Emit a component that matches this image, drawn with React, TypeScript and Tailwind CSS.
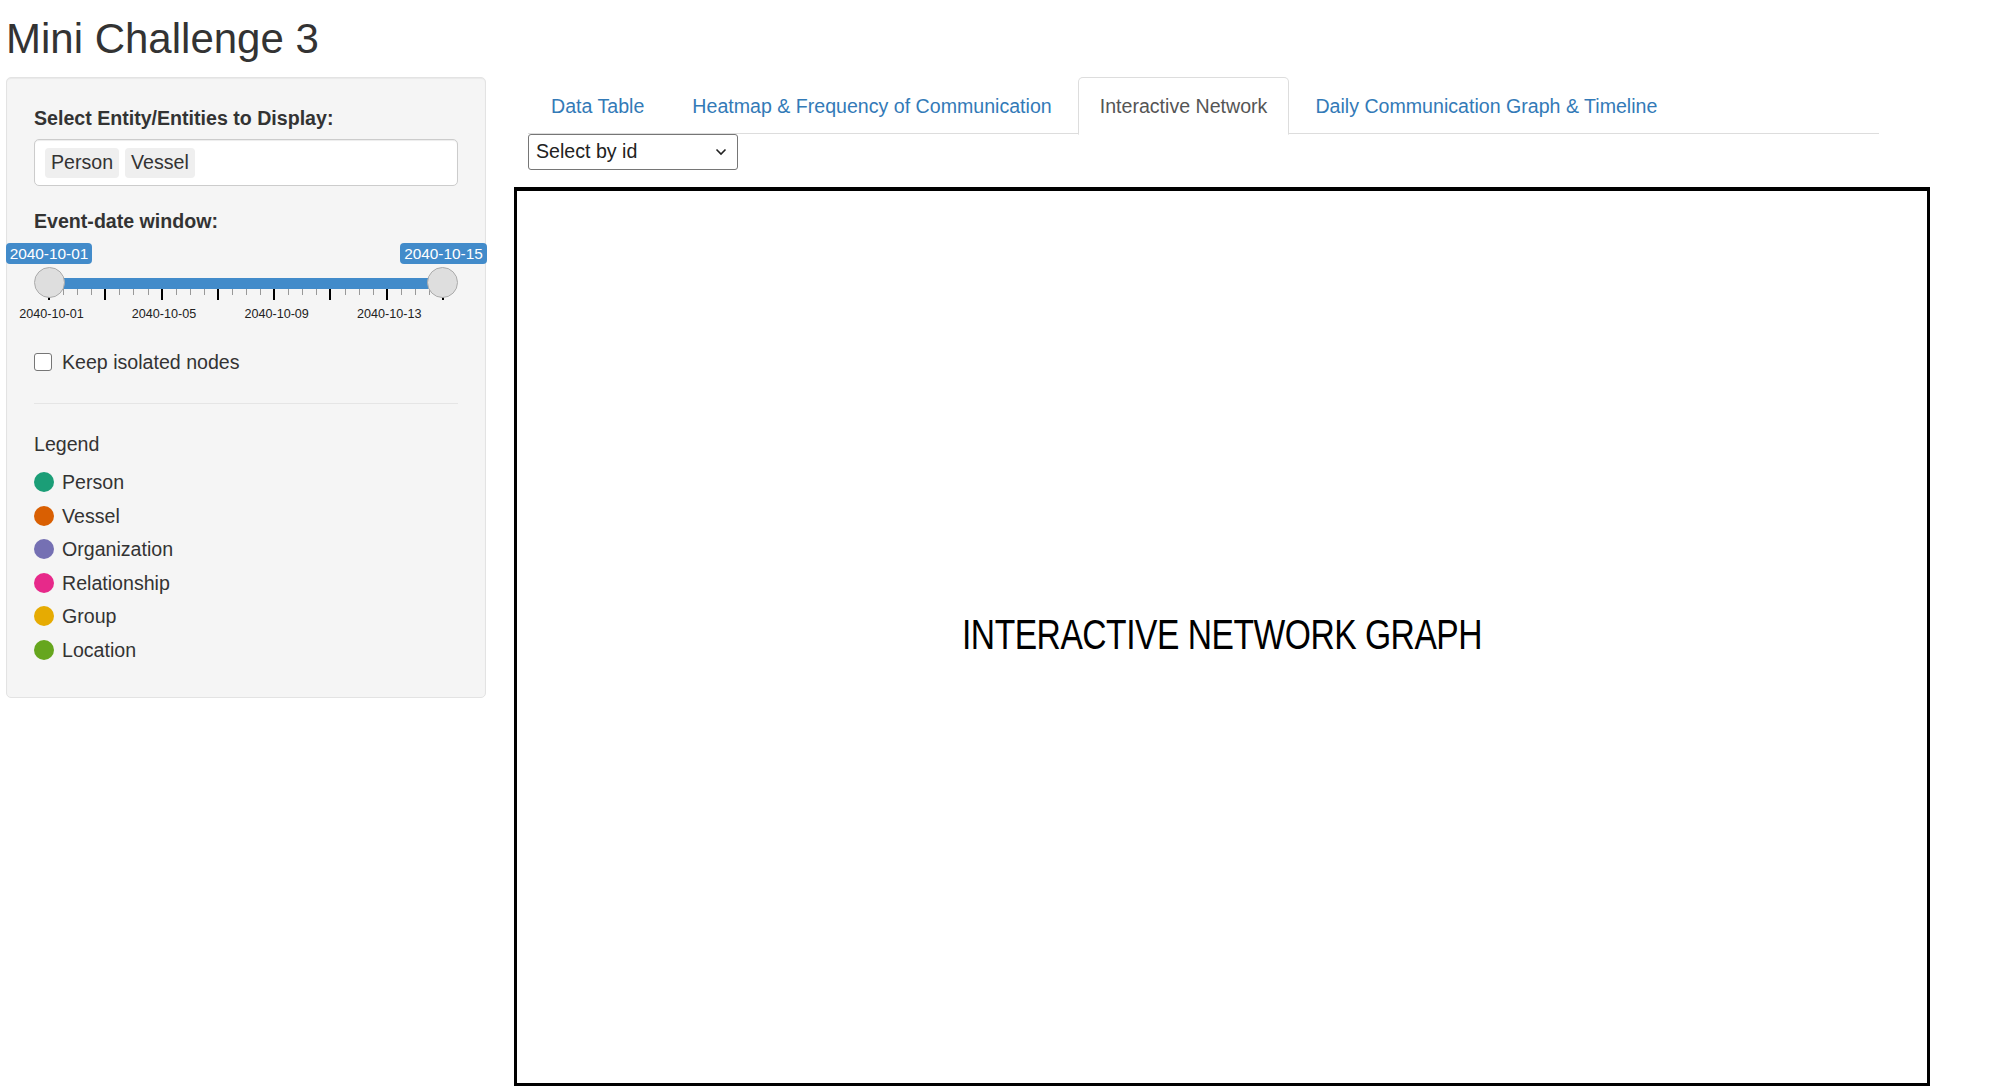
import React from "react";

const legend = [
  { label: "Person", color: "bg-[#1b9e77]" },
  { label: "Vessel", color: "bg-[#d95f02]" },
  { label: "Organization", color: "bg-[#7570b3]" },
  { label: "Relationship", color: "bg-[#e7298a]" },
  { label: "Group", color: "bg-[#e6ab02]" },
  { label: "Location", color: "bg-[#66a61e]" },
];

const tabs = [
  { label: "Data Table", active: false },
  { label: "Heatmap & Frequency of Communication", active: false },
  { label: "Interactive Network", active: true },
  { label: "Daily Communication Graph & Timeline", active: false },
];

const tickCount = 29;
const trackLeft = 15;
const trackWidth = 394;
const gridLabels = [
  { i: 0, text: "2040-10-01" },
  { i: 8, text: "2040-10-05" },
  { i: 16, text: "2040-10-09" },
  { i: 24, text: "2040-10-13" },
];

function DateSlider() {
  const step = trackWidth / (tickCount - 1);
  return (
    <div className="relative h-[90px] w-full">
      {Array.from({ length: tickCount }, (_, i) => {
        const major = i % 4 === 0;
        const x = trackLeft + i * step;
        return major ? (
          <div
            key={i}
            className="absolute top-[54px] h-[11px] w-[2px] bg-black"
            style={{ left: x - 1 }}
          />
        ) : (
          <div
            key={i}
            className="absolute top-[54px] h-[6px] w-[1px] bg-[#999]"
            style={{ left: x }}
          />
        );
      })}
      {gridLabels.map((g) => (
        <div
          key={g.i}
          className="absolute top-[72px] -translate-x-1/2 whitespace-nowrap text-[12.6px] leading-[14px] text-[#222]"
          style={{ left: trackLeft + g.i * step + 2.5 }}
        >
          {g.text}
        </div>
      ))}
      <div className="absolute left-[15px] top-[43px] h-[11px] w-[394px] bg-[#428bca]" />
      <div className="absolute left-[0px] top-[32px] h-[31px] w-[31px] rounded-full border border-[#ababab] bg-[#dedede]" />
      <div className="absolute left-[393px] top-[32px] h-[31px] w-[31px] rounded-full border border-[#ababab] bg-[#dedede]" />
      <div className="absolute left-[-28px] top-[8px] h-[21px] w-[86px] rounded-[4px] bg-[#428bca] text-center text-[15.4px] leading-[21px] text-white">
        2040-10-01
      </div>
      <div className="absolute left-[366px] top-[8px] h-[21px] w-[87px] rounded-[4px] bg-[#428bca] text-center text-[15.4px] leading-[21px] text-white">
        2040-10-15
      </div>
    </div>
  );
}

function Sidebar() {
  return (
    <div className="w-[480px] shrink-0 rounded-[5px] border border-[#e3e3e3] bg-[#f5f5f5] px-[27px] pt-[26px] pb-[33px] shadow-[inset_0_1px_1px_rgba(0,0,0,0.05)]">
      <div className="mb-[7px] text-[19.6px] font-bold leading-[28px] text-[#333]">
        Select Entity/Entities to Display:
      </div>
      <div className="flex h-[47px] items-center gap-[6px] rounded-[5px] border border-[#ccc] bg-white pl-[10px] shadow-[inset_0_1px_1px_rgba(0,0,0,0.075)]">
        <span className="flex h-[30px] items-center rounded-[4px] bg-[#efefef] px-[6px] text-[19.6px] text-[#333]">
          Person
        </span>
        <span className="flex h-[30px] items-center rounded-[4px] bg-[#efefef] px-[6px] text-[19.6px] text-[#333]">
          Vessel
        </span>
      </div>
      <div className="mt-[21px] text-[19.6px] font-bold leading-[28px] text-[#333]">
        Event-date window:
      </div>
      <DateSlider />
      <div className="mt-[23px] mb-[1px] flex h-[28px] items-center gap-[10px]">
        <div className="h-[18px] w-[18px] rounded-[3px] border-[1.5px] border-[#767676] bg-white" />
        <span className="text-[19.6px] leading-[28px] text-[#333]">Keep isolated nodes</span>
      </div>
      <div className="mt-[27px] border-t border-[#e5e5e5]" />
      <div className="mt-[26px] text-[19.6px] leading-[28px] text-[#333]">Legend</div>
      <div className="mt-[10px] flex flex-col gap-[5.6px]">
        {legend.map((l) => (
          <div key={l.label} className="flex h-[28px] items-center gap-[8px]">
            <span className={`h-[20px] w-[20px] rounded-full ${l.color}`} />
            <span className="text-[19.6px] leading-[28px] text-[#333]">{l.label}</span>
          </div>
        ))}
      </div>
    </div>
  );
}

function Main() {
  return (
    <div className="flex w-[1351px] flex-col">
      <ul className="flex h-[57px] border-b border-[#ddd] pl-[1px]">
        {tabs.map((t) =>
          t.active ? (
            <li
              key={t.label}
              className="mr-[4px] mb-[-1px] h-[58px] rounded-t-[5px] border border-[#ddd] border-b-transparent bg-white px-[21px] py-[14px] text-[19.6px] leading-[28px] text-[#555]"
            >
              {t.label}
            </li>
          ) : (
            <li
              key={t.label}
              className="mr-[4px] mb-[-1px] h-[58px] rounded-t-[5px] border border-transparent px-[21px] py-[14px] text-[19.6px] leading-[28px] text-[#337ab7]"
            >
              {t.label}
            </li>
          )
        )}
      </ul>
      <div className="flex h-[36px] w-[210px] items-center justify-between rounded-[3px] border border-[#767676] bg-white pl-[7px] pr-[10px] text-[19.6px] text-[#222]">
        <span>Select by id</span>
        <svg width="12" height="8" viewBox="0 0 12 8" fill="none">
          <path d="M1.5 1.5 L6 6 L10.5 1.5" stroke="#222" strokeWidth="1.6" />
        </svg>
      </div>
      <div className="mt-[17px] -ml-[14px] flex h-[899px] w-[1416px] items-center justify-center border-[3px] border-t-[4px] border-black bg-white">
        <span className="mb-[6px] inline-block scale-x-[0.8] whitespace-nowrap text-[42px] tracking-[-0.6px] text-black">
          INTERACTIVE NETWORK GRAPH
        </span>
      </div>
    </div>
  );
}

export default function App() {
  return (
    <div className="h-[1086px] w-[2000px] overflow-hidden bg-white px-[6px] font-['Liberation_Sans',Arial,sans-serif] text-[#333]">
      <h2 className="mt-[16px] mb-[15px] text-[42px] font-normal leading-[46px] text-[#333]">
        Mini Challenge 3
      </h2>
      <div className="flex items-start gap-[42px]">
        <Sidebar />
        <Main />
      </div>
    </div>
  );
}
